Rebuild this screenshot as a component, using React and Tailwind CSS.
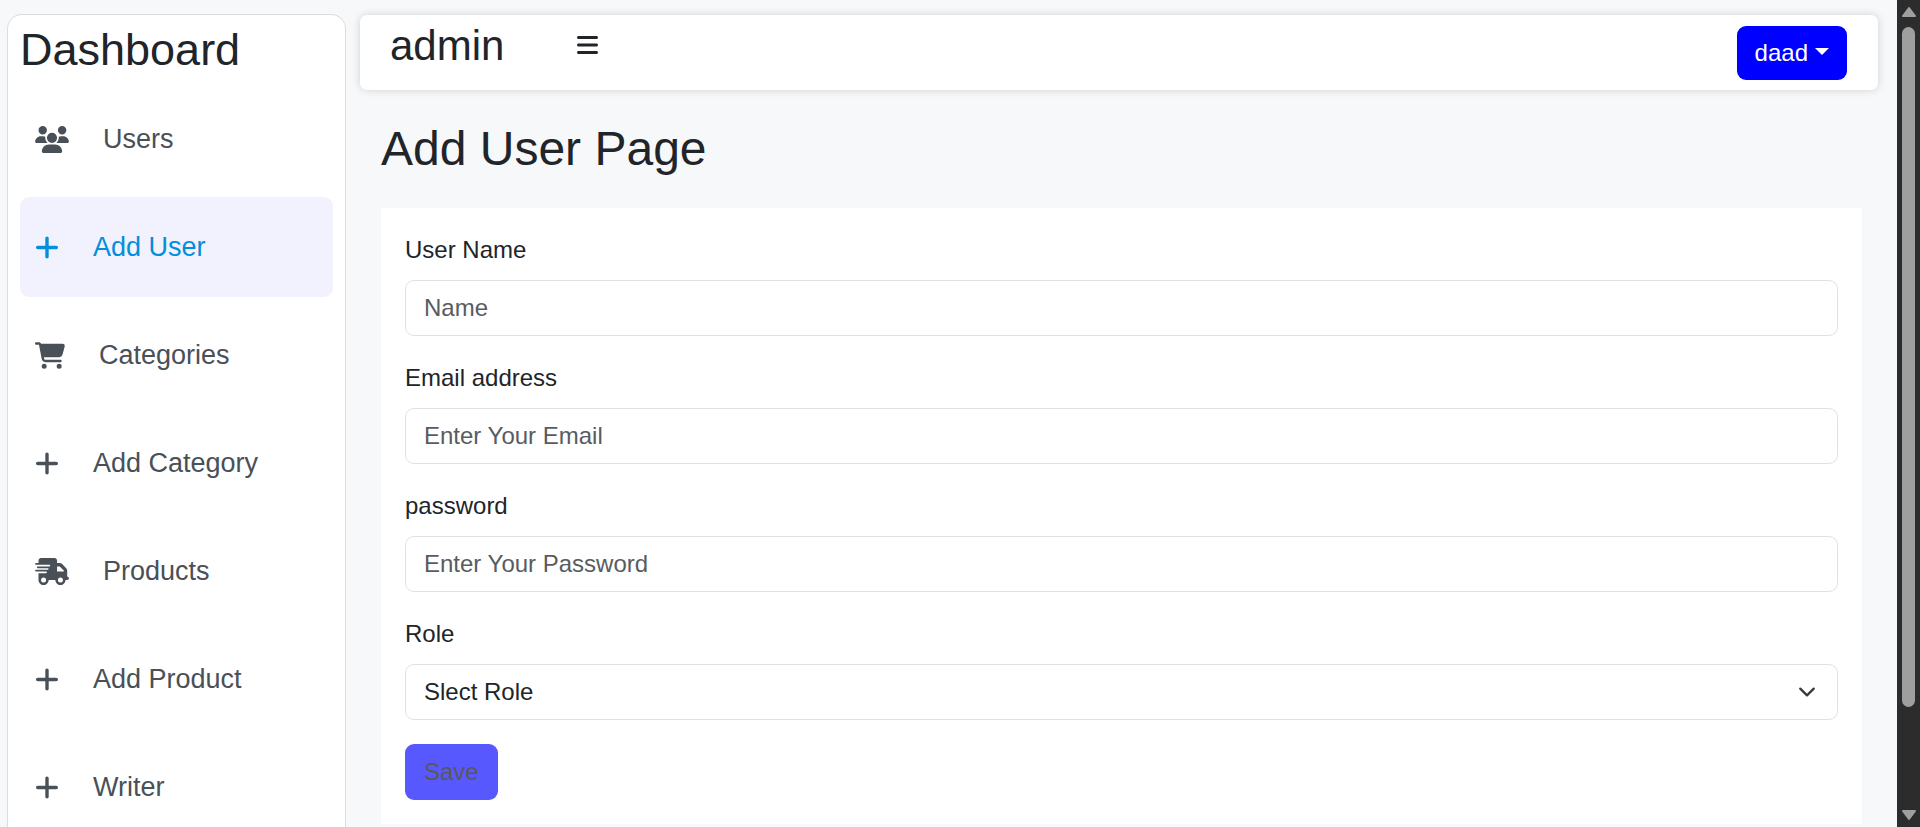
import React from "react";
import { FaUsers, FaPlus, FaCartShopping, FaTruckFast, FaBars } from "react-icons/fa6";

const links = [
  { label: "Users", Icon: FaUsers, iconWidth: "w-[34px]" },
  { label: "Add User", Icon: FaPlus, iconWidth: "w-6", active: true },
  { label: "Categories", Icon: FaCartShopping, iconWidth: "w-[30px]" },
  { label: "Add Category", Icon: FaPlus, iconWidth: "w-6" },
  { label: "Products", Icon: FaTruckFast, iconWidth: "w-[34px]" },
  { label: "Add Product", Icon: FaPlus, iconWidth: "w-6" },
  { label: "Writer", Icon: FaPlus, iconWidth: "w-6" },
];

const fields = [
  { id: "name", label: "User Name", type: "text", placeholder: "Name" },
  { id: "email", label: "Email address", type: "email", placeholder: "Enter Your Email" },
  { id: "password", label: "password", type: "password", placeholder: "Enter Your Password" },
];

const control =
  "block h-14 w-full rounded-[9px] border border-[#dee2e6] bg-white px-[18px] text-2xl text-[#212529] placeholder:text-[#595c5f] placeholder:opacity-100";

function Sidebar() {
  return (
    <aside className="w-[339px] shrink-0 overflow-hidden rounded-t-[15px] border border-b-0 border-[#dddddd] bg-white px-3 pt-2">
      <h2 className="text-[45px] leading-[54px]">Dashboard</h2>
      <nav className="mt-3 flex flex-col gap-2">
        {links.map(({ label, Icon, iconWidth, active }) => (
          <a
            key={label}
            href="#"
            aria-current={active ? "page" : undefined}
            className={`flex h-[100px] shrink-0 items-center gap-[34px] rounded-[9px] px-[15px] text-[27px] leading-10 ${
              active ? "bg-[#f2f2ff] text-[#038edc]" : "text-[#495057]"
            }`}
          >
            <Icon aria-hidden="true" className={`h-[27px] shrink-0 ${iconWidth}`} />
            {label}
          </a>
        ))}
      </nav>
    </aside>
  );
}

function TopBar() {
  return (
    <header className="flex h-[75px] items-start justify-between rounded-[7px] bg-white pt-[6px] pr-[31px] pl-[30px] shadow-[0_0_8px_rgba(0,0,0,0.16)]">
      <div className="flex items-start gap-[73px]">
        <span className="text-[42px] leading-[50px]">admin</span>
        <button type="button" aria-label="Toggle menu" className="mt-3">
          <FaBars aria-hidden="true" className="h-6 w-[21px]" />
        </button>
      </div>
      <button
        type="button"
        aria-haspopup="menu"
        className="mt-[5px] flex h-[54px] items-center gap-[7px] rounded-[9px] bg-[#0000ff] px-[18px] text-2xl text-white"
      >
        daad
        <svg aria-hidden="true" viewBox="0 0 14 7" className="mb-1 h-[7px] w-[14px] fill-current">
          <path d="M0 0H14L7 7Z" />
        </svg>
      </button>
    </header>
  );
}

function UserForm() {
  return (
    <form className="flex flex-col gap-6 bg-white p-6" onSubmit={(e) => e.preventDefault()}>
      {fields.map(({ id, label, type, placeholder }) => (
        <div key={id}>
          <label htmlFor={id} className="mb-3 block text-2xl leading-9">
            {label}
          </label>
          <input id={id} type={type} placeholder={placeholder} className={control} />
        </div>
      ))}
      <div>
        <label htmlFor="role" className="mb-3 block text-2xl leading-9">
          Role
        </label>
        <div className="relative">
          <select id="role" className={`${control} appearance-none`} defaultValue="">
            <option value="">Slect Role</option>
          </select>
          <svg
            aria-hidden="true"
            viewBox="0 0 16 16"
            className="pointer-events-none absolute inset-y-0 right-[19px] my-auto h-[18px] w-6 fill-none stroke-[#343a40]"
            strokeWidth="2"
            strokeLinecap="round"
            strokeLinejoin="round"
          >
            <path d="m2 5 6 6 6-6" />
          </svg>
        </div>
      </div>
      <button
        type="submit"
        disabled
        className="h-14 self-start rounded-[9px] bg-[#0000ff] px-[19px] text-2xl text-black opacity-65"
      >
        Save
      </button>
    </form>
  );
}

function ScrollTrack() {
  return (
    <div aria-hidden="true" className="flex w-[23px] shrink-0 flex-col items-center bg-[#2c2c2c] py-[6px]">
      <svg viewBox="0 0 14 11" className="h-[11px] w-[14px] fill-[#9f9f9f] stroke-[#9f9f9f]" strokeWidth="2" strokeLinejoin="round">
        <path d="M7 2L13 10H1Z" />
      </svg>
      <div className="w-[13px] flex-1 py-[10px]">
        <div className="h-[88%] rounded-full bg-[#9f9f9f]" />
      </div>
      <svg viewBox="0 0 14 11" className="h-[11px] w-[14px] fill-[#9f9f9f] stroke-[#9f9f9f]" strokeWidth="2" strokeLinejoin="round">
        <path d="M7 9L1 1H13Z" />
      </svg>
    </div>
  );
}

export default function App() {
  return (
    <div className="flex h-screen overflow-hidden bg-[#f6f8fa] font-['Liberation_Sans',Arial,sans-serif] text-[#212529]">
      <div className="flex min-w-0 flex-1 gap-[14px] pt-[14px] pl-[7px]">
        <Sidebar />
        <main className="min-w-0 flex-1 pt-px pr-[19px]">
          <TopBar />
          <section className="pt-[30px] pr-4 pl-[21px]">
            <h1 className="mb-[30px] text-5xl leading-[58px]">Add User Page</h1>
            <UserForm />
          </section>
        </main>
      </div>
      <ScrollTrack />
    </div>
  );
}
